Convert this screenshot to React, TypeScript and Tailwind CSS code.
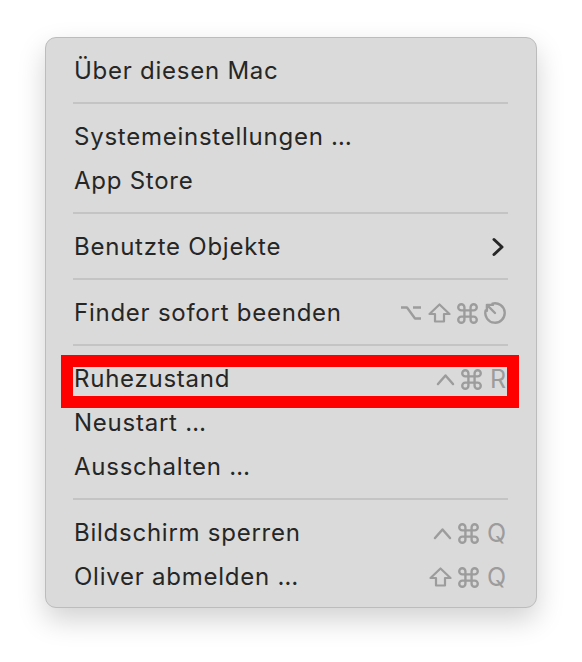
import React from "react";

type Item = {
    label: string;
    keys?: React.ReactNode;
    submenu?: boolean;
    marked?: boolean;
};

const stroke = "#9c9c9c";

function OptionKey() {
    return (
        <svg width="22" height="16" viewBox="0 0 22 16" fill="none" stroke={stroke} strokeWidth="2.4" strokeLinejoin="round">
            <path d="M1 2.5H7L15 13.5H21M13 2.5H21" />
        </svg>
    );
}

function ShiftKey() {
    return (
        <svg width="23" height="20" viewBox="0 0 23 20" fill="none" stroke={stroke} strokeWidth="2.2" strokeLinejoin="round">
            <path d="M11.5 1.5L21.5 11H16V18.5H7V11H1.5Z" />
        </svg>
    );
}

function CommandKey() {
    return (
        <svg width="21" height="21" viewBox="1.8 1.8 20.4 20.4" fill="none" stroke={stroke} strokeWidth="2.3" strokeLinecap="round" strokeLinejoin="round">
            <path d="M15 6v12a3 3 0 1 0 3-3H6a3 3 0 1 0 3 3V6a3 3 0 1 0-3 3h12a3 3 0 1 0-3-3" />
        </svg>
    );
}

function ControlKey() {
    return (
        <svg width="19" height="13" viewBox="0 0 19 13" fill="none" stroke={stroke} strokeWidth="2.5" strokeLinecap="round" strokeLinejoin="round">
            <path d="M2 11L9.5 2.5L17 11" />
        </svg>
    );
}

function EscapeKey() {
    return (
        <svg width="22" height="22" viewBox="1.8 1.8 20.4 20.4" fill="none" stroke={stroke} strokeWidth="2.2" strokeLinecap="round" strokeLinejoin="round">
            <path d="M9.67 3.3A9 9 0 1 1 3.3 9.67" />
            <path d="M12 12L4.5 4.5M4.5 10V4.5H10" />
        </svg>
    );
}

function Letter({ c }: { c: string }) {
    return <span className="ml-[2px] text-[25px] leading-none text-[#9c9c9c]">{c}</span>;
}

const groups: Item[][] = [
    [{ label: "Über diesen Mac" }],
    [{ label: "Systemeinstellungen …" }, { label: "App Store" }],
    [{ label: "Benutzte Objekte", submenu: true }],
    [
        {
            label: "Finder sofort beenden",
            keys: (
                <>
                    <OptionKey />
                    <ShiftKey />
                    <CommandKey />
                    <EscapeKey />
                </>
            ),
        },
    ],
    [
        {
            label: "Ruhezustand",
            marked: true,
            keys: (
                <>
                    <ControlKey />
                    <CommandKey />
                    <Letter c="R" />
                </>
            ),
        },
        { label: "Neustart …" },
        { label: "Ausschalten …" },
    ],
    [
        {
            label: "Bildschirm sperren",
            keys: (
                <>
                    <ControlKey />
                    <CommandKey />
                    <Letter c="Q" />
                </>
            ),
        },
        {
            label: "Oliver abmelden …",
            keys: (
                <>
                    <ShiftKey />
                    <CommandKey />
                    <Letter c="Q" />
                </>
            ),
        },
    ],
];

function MenuRow({ item }: { item: Item }) {
    return (
        <div className="relative flex h-[44px] items-center justify-between pl-[28px] pr-[30px]">
            <span className="text-[24px] leading-none tracking-[0.75px] text-[#262626]">{item.label}</span>
            {item.keys && <span className="flex items-center gap-[6px]">{item.keys}</span>}
            {item.submenu && (
                <svg width="14" height="20" viewBox="0 0 14 20" fill="none" stroke="#262626" strokeWidth="3" strokeLinecap="round" strokeLinejoin="round" className="mr-[1px]">
                    <path d="M3 2.5L11 10L3 17.5" />
                </svg>
            )}
            {/* red highlight frame over the row */}
            {item.marked && (
                <div className="absolute left-[15px] top-[-2px] h-[53px] w-[458px] border-[12px] border-[#ff0000]" />
            )}
        </div>
    );
}

export default function App() {
    return (
        <div className="min-h-[662px] w-[582px] bg-white pl-[45px] pt-[37px] font-['Inter','Liberation_Sans',sans-serif]">
            <div className="w-[492px] rounded-[11px] border border-[#bcbcbc] bg-[#dadada] pb-[8px] pt-[11px] shadow-[0_12px_28px_rgba(0,0,0,0.18)]">
                {groups.map((group, gi) => (
                    <div key={gi}>
                        {gi > 0 && (
                            <div className="h-[22px] pt-[9px]">
                                <div className="ml-[27px] mr-[28px] h-[2px] bg-[#c4c4c4]" />
                            </div>
                        )}
                        {group.map((item) => (
                            <MenuRow key={item.label} item={item} />
                        ))}
                    </div>
                ))}
            </div>
        </div>
    );
}
